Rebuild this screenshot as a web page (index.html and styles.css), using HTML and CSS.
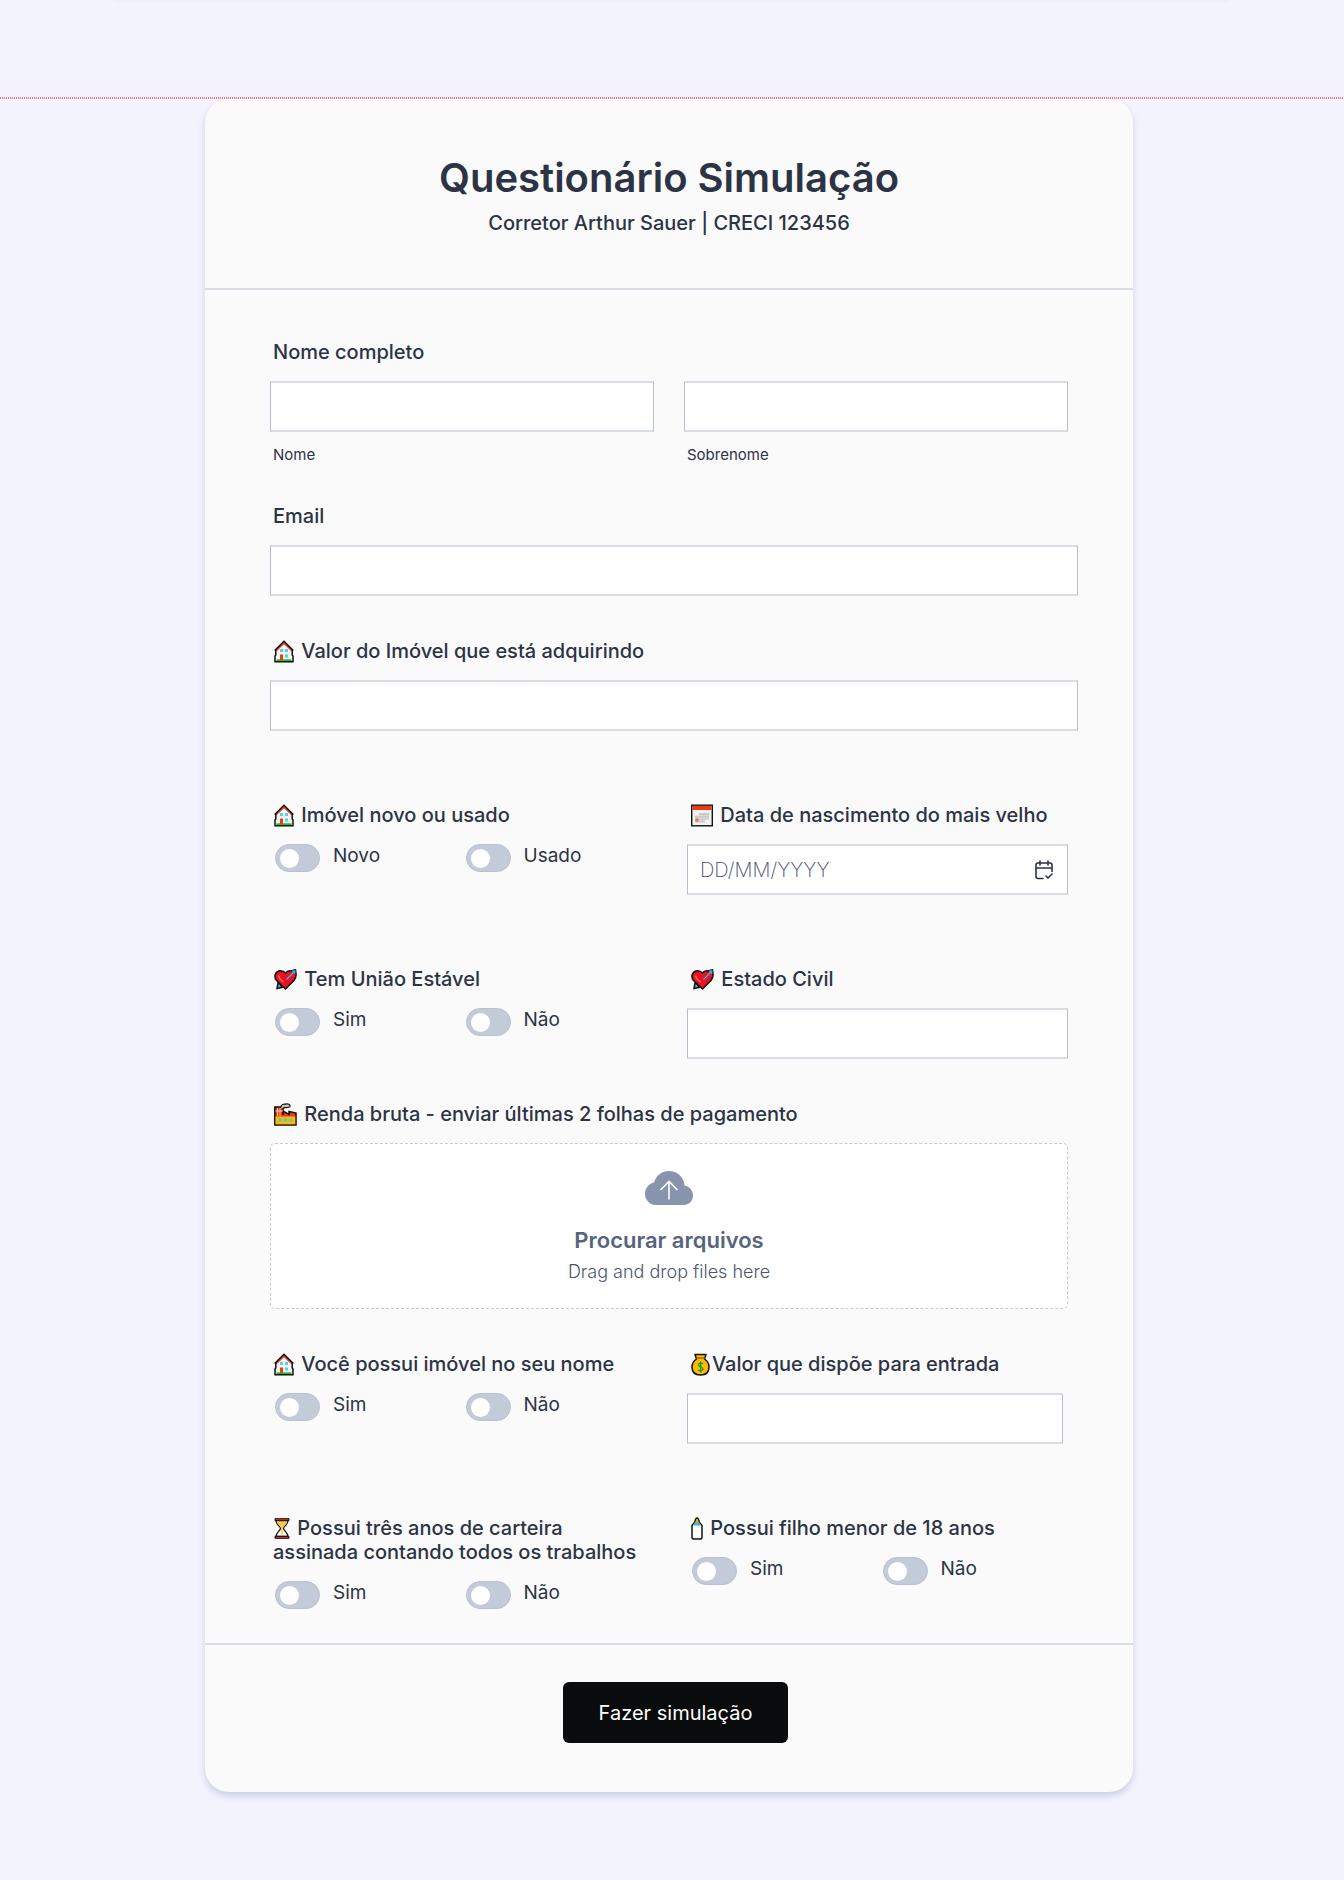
FILE: index.html
```html
<!DOCTYPE html>
<html lang="pt-BR">
<head>
  <meta charset="UTF-8">
  <meta name="viewport" content="width=device-width, initial-scale=1">
  <title>Questionário Simulação</title>
  <link rel="stylesheet" href="styles.css">
</head>
<body>

  <!-- Emoji icons shared by the labels -->
  <svg class="sprite" aria-hidden="true">
    <symbol id="house" viewBox="0 0 20 23">
      <path d="M10 2 2 9.500V21.500H18V9.500Z" fill="#f4f4f4"/>
      <path d="M2.500 20.300H17.500" stroke="#16c60c" stroke-width="2"/>
      <path d="M2 10.500 10 3 18 10.500" fill="none" stroke="#e8401f" stroke-width="1.800"/>
      <path d="M.700 10.500 10 1.200 19.300 10.500M1.800 9.500V15L1 16V21.700H19V16L18.200 15V9.500" fill="none" stroke="#111" stroke-width="1.500"/>
      <path d="M6 9h3v3H6zM11 9h3v3h-3zM11 14.500h3v3h-3z" fill="#55d0f5"/>
      <path d="M6 14.500h3v5.500H6z" fill="#f03a17"/>
    </symbol>
    <symbol id="calendar" viewBox="0 0 22 22">
      <rect x="0.700" y="0.700" width="20.600" height="20.600" fill="#f2f2f2" stroke="#111" stroke-width="1.400"/>
      <path d="M1.400 1.400H20.600V5.500H1.400z" fill="#f03a17"/>
      <path d="M8 8.500H18V15H14V18H4V11H8z" fill="#c4c4c4"/>
      <path d="M4 13.500H18M4 11H18M8 16H14M7 10V18M10 8V18M13 8V18M16 8V15" stroke="#e6e6e6" stroke-width="0.600"/>
      <circle cx="6" cy="15.500" r="1.700" fill="#f76e56"/>
    </symbol>
    <symbol id="heart" viewBox="0 0 23 21">
      <path d="M4 14 3 19.500 8 18.500 6 15Z" fill="#31b9e8" stroke="#111" stroke-width="1.500"/>
      <path d="M11.500 20 2.500 11.500C-1 7 2 1.700 6.500 1.700 9 1.700 10.500 2.700 11.500 4 13 2 15 1.500 17 1.900L21.500 .800 22 4.500C22.500 7.500 21.500 9.500 20 11.500Z" fill="#e81224" stroke="#111" stroke-width="1.500" stroke-linejoin="round"/>
      <path d="M4.500 6.500 6 10 9.500 13" fill="none" stroke="#f66c4e" stroke-width="1.600"/>
      <path d="M12.500 10.500 20 3M18 2.200 20.800 2 20.600 4.800" fill="none" stroke="#31b9e8" stroke-width="1.300"/>
    </symbol>
    <symbol id="factory" viewBox="0 0 23 23">
      <path d="M.800 4H9V12L9 8 15 11.500V8.500L22 10V22H.800z" fill="#f03a17" stroke="#111" stroke-width="1.500"/>
      <path d="M3.500 5V13M6 5V13M1.500 8H9" stroke="#f7d7d0" stroke-width="0.900"/>
      <path d="M1.500 13.500H21.300V21.300H1.500z" fill="#ffb900"/>
      <path d="M4.500 15.500h3v3h-3zM10 15.500h3v3h-3zM15.500 15.500h3v3h-3z" fill="#31d2f7"/>
      <path d="M7 4C7 1.500 10 .700 11.500 1.200 14 .300 16.500 1.500 16 3.500 15 5 12 4.500 10.500 4.500L8.500 6" fill="#ccc" stroke="#111" stroke-width="1.300"/>
    </symbol>
    <symbol id="moneybag" viewBox="0 0 19 23">
      <path d="M4 1.500H15L13.500 6C16.500 8 18 10.500 18 14 18 19 15 22 9.500 22S1 19 1 14C1 10.500 2.500 8 5.500 6Z" fill="#ffb900" stroke="#111" stroke-width="1.500" stroke-linejoin="round"/>
      <path d="M5 5H14" stroke="#8a5a00" stroke-width="1.200"/>
      <path d="M12 10.800C10.500 9.500 7.500 10 7.500 12 7.500 14.500 12 13.500 12 16 12 18 9 18.500 7 17M9.700 8.500V19.500" fill="none" stroke="#10a010" stroke-width="1.300"/>
    </symbol>
    <symbol id="hourglass" viewBox="0 0 16 22">
      <path d="M2 3H14C14 7 9.500 9 9.500 11S14 15 14 19H2C2 15 6.500 13 6.500 11S2 7 2 3Z" fill="#fff" stroke="#111" stroke-width="1.300"/>
      <path d="M2.700 3.500H13.300C13 6.500 9.300 8.500 8.800 11V17H7.200V11C6.700 8.500 3 6.500 2.700 3.500Z" fill="#ffc83d"/>
      <path d="M1 1.200H15V3.200H1zM1 18.800H15V20.800H1z" fill="#e8341c" stroke="#111" stroke-width="1"/>
    </symbol>
    <symbol id="bottle" viewBox="0 0 12 23">
      <path d="M3.500 6C4 3 5 1 6 1S8 3 8.500 6Z" fill="#f7a500" stroke="#111" stroke-width="1.300"/>
      <path d="M3.500 5.500 1 8.500V20.500Q1 22 2.500 22H9.500Q11 22 11 20.500V8.500L8.500 5.500" fill="#fff" stroke="#111" stroke-width="1.500"/>
      <path d="M3.700 5.800H8.300L10.200 8.500H1.800Z" fill="#31b9e8"/>
      <path d="M4.500 5.500 6 2 7.500 5.500Z" fill="#f7a500"/>
    </symbol>
  </svg>

  <div class="page-top">
    <div class="prev-section"></div>
  </div>

  <main class="page">
    <form class="form-card">
      <header class="form-header">
        <h1>Questionário Simulação</h1>
        <p>Corretor Arthur Sauer | CRECI 123456</p>
      </header>

      <div class="form-body">
        <fieldset class="row">
          <legend class="label">Nome completo</legend>
          <div class="name-cols">
            <div>
              <input class="input" type="text" id="nome">
              <label class="sub-label" for="nome">Nome</label>
            </div>
            <div>
              <input class="input" type="text" id="sobrenome">
              <label class="sub-label" for="sobrenome">Sobrenome</label>
            </div>
          </div>
        </fieldset>

        <div class="row row-wide">
          <label class="label" for="email">Email</label>
          <input class="input" type="email" id="email">
        </div>

        <div class="row row-wide with-space">
          <label class="label" for="valor"><svg class="emoji w20"><use href="#house"/></svg> Valor do Imóvel que está adquirindo</label>
          <input class="input" type="text" id="valor">
        </div>

        <div class="row cols with-space">
          <fieldset>
            <legend class="label"><svg class="emoji w20"><use href="#house"/></svg> Imóvel novo ou usado</legend>
            <div class="options">
              <label class="option"><input type="radio" name="estado">Novo</label>
              <label class="option"><input type="radio" name="estado">Usado</label>
            </div>
          </fieldset>
          <div>
            <label class="label" for="nascimento"><svg class="emoji w22"><use href="#calendar"/></svg> Data de nascimento do mais velho</label>
            <div class="date-box">
              <input class="input" type="text" id="nascimento" placeholder="DD/MM/YYYY">
              <button class="date-button" type="button" aria-label="Abrir calendário">
                <svg viewBox="0 0 18 20" width="18" height="20" fill="none" stroke="#2c3345" stroke-width="1.600" stroke-linecap="round" stroke-linejoin="round">
                  <path d="M8 18.500H3A2 2 0 0 1 1 16.500V5A2 2 0 0 1 3 3H15A2 2 0 0 1 17 5V11.500M1 8H17M5 1V5M13 1V5M11 16 13 18 17 14"/>
                </svg>
              </button>
            </div>
          </div>
        </div>

        <div class="row cols">
          <fieldset>
            <legend class="label"><svg class="emoji w23"><use href="#heart"/></svg> Tem União Estável</legend>
            <div class="options">
              <label class="option"><input type="radio" name="uniao">Sim</label>
              <label class="option"><input type="radio" name="uniao">Não</label>
            </div>
          </fieldset>
          <div>
            <label class="label" for="civil"><svg class="emoji w23"><use href="#heart"/></svg> Estado Civil</label>
            <input class="input" type="text" id="civil">
          </div>
        </div>

        <div class="row">
          <div class="label" id="renda"><svg class="emoji w23"><use href="#factory"/></svg> Renda bruta - enviar últimas 2 folhas de pagamento</div>
          <button class="dropzone" type="button" aria-describedby="renda">
            <svg viewBox="0 0 48 34" width="48" height="34">
              <path d="M11 34A11 11 0 0 1 0 23C0 17 4 12.500 9 11.500 11 4.500 17 0 24 0 32 0 39 6 39.500 14.500 44.500 15.500 48 19.500 48 24.500 48 30 44 34 38.500 34Z" fill="#8894ab"/>
              <path d="M24 28.500V10.500M15.500 19 24 10.500 32.500 19" fill="none" stroke="#fff" stroke-width="1.600"/>
            </svg>
            <span class="drop-title">Procurar arquivos</span>
            <span class="drop-text">Drag and drop files here</span>
          </button>
        </div>

        <div class="row cols with-space">
          <fieldset>
            <legend class="label"><svg class="emoji w20"><use href="#house"/></svg> Você possui imóvel no seu nome</legend>
            <div class="options">
              <label class="option"><input type="radio" name="imovel">Sim</label>
              <label class="option"><input type="radio" name="imovel">Não</label>
            </div>
          </fieldset>
          <div class="short">
            <label class="label" for="entrada"><svg class="emoji w19"><use href="#moneybag"/></svg>Valor que dispõe para entrada</label>
            <input class="input" type="text" id="entrada">
          </div>
        </div>

        <div class="row cols">
          <fieldset>
            <legend class="label"><svg class="emoji w16"><use href="#hourglass"/></svg> Possui três anos de carteira<br>assinada contando todos os trabalhos</legend>
            <div class="options">
              <label class="option"><input type="radio" name="carteira">Sim</label>
              <label class="option"><input type="radio" name="carteira">Não</label>
            </div>
          </fieldset>
          <fieldset>
            <legend class="label"><svg class="emoji w12"><use href="#bottle"/></svg> Possui filho menor de 18 anos</legend>
            <div class="options">
              <label class="option"><input type="radio" name="filho">Sim</label>
              <label class="option"><input type="radio" name="filho">Não</label>
            </div>
          </fieldset>
        </div>
      </div>

      <footer class="form-footer">
        <button class="submit" type="submit">Fazer simulação</button>
      </footer>
    </form>
  </main>

</body>
</html>
```
FILE: styles.css
```css
* {
  box-sizing: border-box;
}

body {
  margin: 0;
  background-color: #f3f3fe;
  color: #2c3345;
  font-family: Inter, "Liberation Sans", sans-serif;
  font-size: 20px;
  line-height: 24px;
}

.sprite {
  display: none;
}

/* end of the section above, with the dotted divider */
.page-top {
  height: 99px;
  background: repeating-linear-gradient(90deg, #ff6b78 0 1px, #f8eef8 1px 2px) bottom / 100% 2px no-repeat;
}

.prev-section {
  width: 83%;
  height: 4px;
  margin: 0 auto;
  border-radius: 0 0 8px 8px;
  background: linear-gradient(#efeff9, #f3f3fe);
}

.page {
  padding: 0 6px 88px 0;
}

.form-card {
  max-width: 928px;
  margin: 0 auto;
  background-color: #fafafa;
  border-radius: 24px;
  box-shadow: 0 4px 6px rgba(84, 95, 150, 0.24);
}

.form-header {
  padding: 55px 32px 53px;
  border-bottom: 2px solid #d8dce3;
  text-align: center;
}

.form-header h1 {
  margin: 0 0 9px;
  font-size: 40px;
  line-height: 48px;
  font-weight: 600;
}

.form-header p {
  margin: 0;
  font-weight: 500;
}

.form-body {
  padding: 50px 55px 34px 65px;
}

.row {
  margin: 0 10px 43px 0;
}

.row-wide {
  margin-right: 0;
}

.with-space {
  padding-bottom: 29px;
}

.row:last-child {
  margin-bottom: 0;
}

fieldset {
  min-width: 0;
  margin: 0;
  padding: 0;
  border: 0;
}

.cols,
.name-cols {
  display: grid;
  grid-template-columns: 1fr 1fr;
  column-gap: 36px;
}

.name-cols {
  column-gap: 30px;
}

.short .input {
  width: calc(100% - 5px);
}

.label {
  display: block;
  margin-bottom: 17px;
  padding: 0 0 0 3px;
  font-weight: 500;
}

.input {
  display: block;
  width: 100%;
  height: 51px;
  padding: 0 12px;
  border: 1px solid #b8bdc9;
  border-width: 2px 1px;
  border-color: #d8dce3 #b8bdc9;
  background-color: #fff;
  color: #2c3345;
  font: inherit;
}

.input::placeholder {
  color: #3f4b68;
  font-weight: 200;
  opacity: 1;
}

.sub-label {
  display: block;
  height: 29px;
  padding: 11px 0 0 3px;
  font-size: 15px;
}

.emoji {
  height: 23px;
  margin: 0 2px 0 1px;
  vertical-align: -5px;
}

.w12 { width: 12px; }
.w16 { width: 16px; }
.w19 { width: 19px; }
.w20 { width: 20px; }
.w22 { width: 22px; }
.w23 { width: 23px; }

.options {
  display: grid;
  grid-template-columns: 1fr 1fr;
}

.option {
  display: flex;
  align-items: flex-start;
  gap: 13px;
  padding-left: 5px;
  font-size: 19px;
}

.option input {
  appearance: none;
  flex: none;
  width: 45px;
  height: 28px;
  margin: 0;
  padding: 4px;
  border: 1px solid #b9c1cf;
  border-radius: 14px;
  background-color: #c3cad8;
}

.option input::before {
  content: "";
  display: block;
  width: 19px;
  height: 19px;
  border-radius: 50%;
  background-color: #fff;
}

.option input:checked::before {
  margin-left: auto;
}

.date-box {
  position: relative;
}

.date-button {
  position: absolute;
  top: 0;
  right: 0;
  display: flex;
  align-items: center;
  height: 100%;
  padding: 0 15px;
  border: 0;
  background: none;
}

.dropzone {
  display: flex;
  flex-direction: column;
  align-items: center;
  width: 100%;
  height: 166px;
  padding: 27px 16px 0;
  border: 1px dashed #c3cad8;
  border-radius: 5px;
  background-color: #fff;
  color: #57647e;
  font: inherit;
}

.drop-title {
  margin: 23px 0 8px;
  font-size: 22px;
  font-weight: 600;
}

.drop-text {
  color: #4a5670;
  font-size: 18px;
  font-weight: 300;
}

.form-footer {
  padding: 37px 0 49px 13px;
  border-top: 2px solid #d8dce3;
  text-align: center;
}

.submit {
  display: block;
  min-width: 225px;
  height: 61px;
  margin: 0 auto;
  padding: 0 32px;
  border: 0;
  border-radius: 6px;
  background-color: #0a0b0d;
  color: #fff;
  font: inherit;
}
```
